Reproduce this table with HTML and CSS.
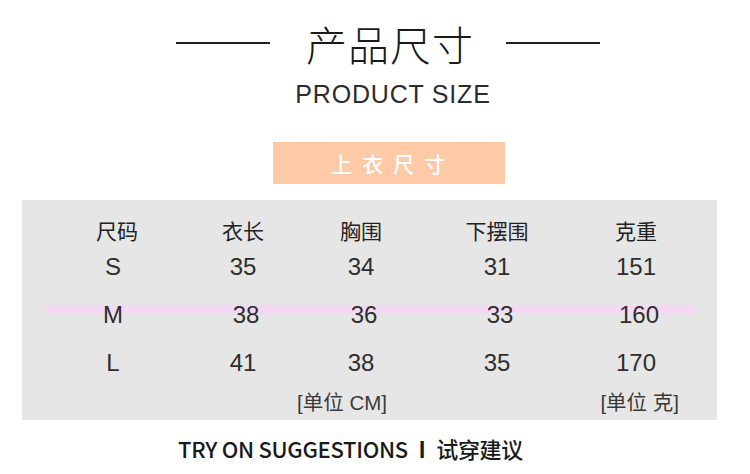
FILE: index.html
```html
<!DOCTYPE html>
<html lang="zh">
<head>
<meta charset="utf-8">
<link rel="stylesheet" href="styles.css">
</head>
<body>
<div class="page">
  <header class="head">
    <span class="rule"></span>
    <h1 class="title">产品尺寸</h1>
    <span class="rule"></span>
  </header>
  <p class="subtitle">PRODUCT SIZE</p>
  <div class="tag-wrap"><div class="tag">上衣尺寸</div></div>
  <section class="table">
    <div class="row row-head"><span>尺码</span><span>衣长</span><span>胸围</span><span>下摆围</span><span>克重</span></div>
    <div class="row row-s"><span class="size">S</span><span>35</span><span>34</span><span>31</span><span>151</span></div>
    <div class="row row-m"><span class="size">M</span><span class="nudge">38</span><span class="nudge">36</span><span class="nudge">33</span><span class="nudge">160</span></div>
    <div class="row row-l"><span class="size">L</span><span>41</span><span>38</span><span>35</span><span>170</span></div>
    <div class="units"><span>[单位 CM]</span><span>[单位 克]</span></div>
  </section>
  <p class="suggest">TRY ON SUGGESTIONS <b class="sep">I</b> 试穿建议</p>
</div>
</body>
</html>
```
FILE: styles.css
```css
* { box-sizing: border-box; margin: 0; padding: 0; }
html, body { background: #ffffff; }
body { width: 750px; height: 474px; overflow: hidden; font-family: "Liberation Sans", "Noto Sans CJK SC", sans-serif; color: #222; }
.page { width: 750px; }

.head { display: flex; align-items: center; justify-content: center; height: 60px; padding: 25px 0 0 26px; }
.rule { display: block; width: 94px; height: 2px; background: #1e1e1e; }
.title { font-family: "Noto Sans CJK SC", sans-serif; font-weight: 300; font-size: 41px; line-height: 46px; letter-spacing: 1px; color: #1a1a1a; margin: 0 32px 0 36px; }

.subtitle { margin-top: 20px; text-align: center; font-size: 25px; line-height: 28px; letter-spacing: 0.8px; color: #2c2c2c; padding-left: 36px; }

.tag-wrap { display: flex; padding-left: 273px; margin-top: 34px; }
.tag { width: 232px; height: 42px; background: #fccaa6; color: #ffffff; font-family: "Noto Sans CJK SC", sans-serif; font-weight: 500; font-size: 21px; line-height: 42px; text-align: center; letter-spacing: 10px; padding-left: 8px; }

.table { margin: 16px 0 0 22px; width: 695px; height: 220px; background: #e6e6e6; padding-top: 12px; color: #2e2e2e; }
.row { display: grid; grid-template-columns: 126px 126px 110px 162px 116px; padding-left: 32px; text-align: center; font-size: 24px; }
.row-head { height: 36px; line-height: 36px; font-family: "Noto Sans CJK SC", sans-serif; font-size: 21px; color: #222; }
.row-s { height: 36px; line-height: 38px; }
.row-m { height: 62px; line-height: 62px; background-image: linear-gradient(#f5d8f5, #f5d8f5); background-size: 650px 9px; background-position: 23px 21px; background-repeat: no-repeat; }
.size { position: relative; left: -4px; }
.nudge { position: relative; left: 3px; }
.row-l { height: 34px; line-height: 34px; }
.units { display: flex; justify-content: space-between; padding: 0 38px 0 275px; margin-top: 10px; height: 26px; line-height: 26px; font-size: 20.5px; color: #3a3a3a; }

.suggest { margin-top: 13px; padding-left: 178px; font-family: "Noto Sans CJK SC", sans-serif; font-weight: 500; font-size: 22px; line-height: 30px; color: #1a1a1a; letter-spacing: -0.3px; }
.sep { font-weight: 700; margin: 0 6px; }
```
